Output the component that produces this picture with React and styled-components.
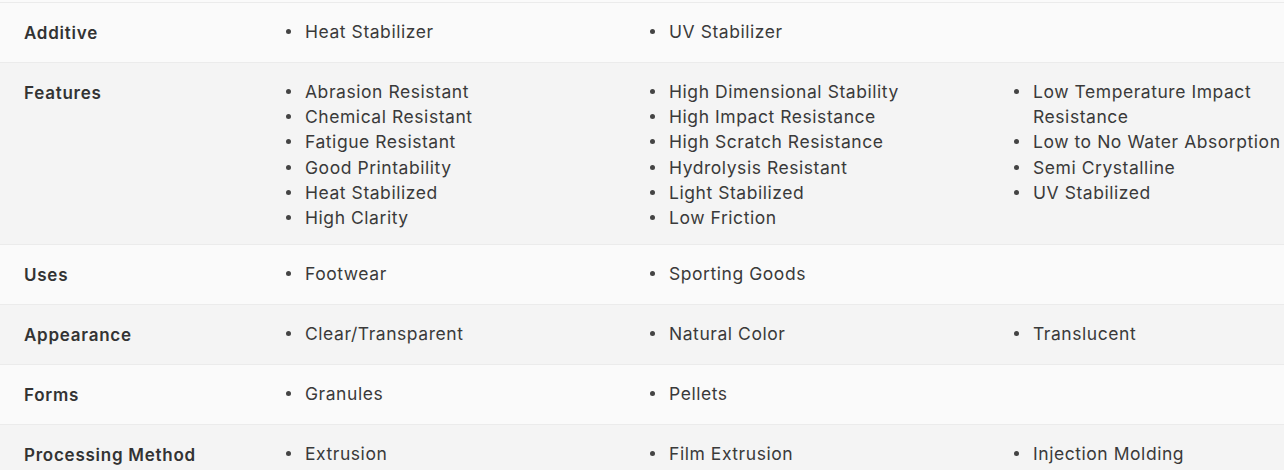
import styled, { createGlobalStyle } from 'styled-components';

const GlobalStyle = createGlobalStyle`
  html, body {
    margin: 0;
    padding: 0;
    background: #fafafa;
  }
  body {
    font-family: Inter, "Noto Sans", sans-serif;
    color: #3a3a3a;
  }
`;

const rows = [
  { label: 'Additive', items: ['Heat Stabilizer', 'UV Stabilizer'] },
  {
    label: 'Features',
    items: [
      'Abrasion Resistant',
      'Chemical Resistant',
      'Fatigue Resistant',
      'Good Printability',
      'Heat Stabilized',
      'High Clarity',
      'High Dimensional Stability',
      'High Impact Resistance',
      'High Scratch Resistance',
      'Hydrolysis Resistant',
      'Light Stabilized',
      'Low Friction',
      'Low Temperature Impact Resistance',
      'Low to No Water Absorption',
      'Semi Crystalline',
      'UV Stabilized',
    ],
  },
  { label: 'Uses', items: ['Footwear', 'Sporting Goods'] },
  { label: 'Appearance', items: ['Clear/Transparent', 'Natural Color', 'Translucent'] },
  { label: 'Forms', items: ['Granules', 'Pellets'] },
  { label: 'Processing Method', items: ['Extrusion', 'Film Extrusion', 'Injection Molding'] },
];

// split items into 3 columns, filled top to bottom
const toColumns = (items) => {
  const per = Math.ceil(items.length / 3);
  const cols = [];
  for (let i = 0; i < items.length; i += per) cols.push(items.slice(i, i + per));
  return cols;
};

const App = () => {
  return (
    <>
      <GlobalStyle />
      <Table>
        {rows.map((row, i) => (
          <Row key={row.label} $alt={i % 2 === 1}>
            <Label>{row.label}</Label>
            <Values>
              {toColumns(row.items).map((col, j) => (
                <List key={j}>
                  {col.map((item) => (
                    <Item key={item}>{item}</Item>
                  ))}
                </List>
              ))}
            </Values>
          </Row>
        ))}
      </Table>
    </>
  );
};

const Table = styled.div`
  margin-top: 2px;
  border-top: 1px solid #ebebeb;
  width: 1284px;
  overflow: hidden;
`;

const Row = styled.div`
  display: grid;
  grid-template-columns: 264px 1fr;
  background-color: ${(p) => (p.$alt ? '#f4f4f4' : '#fafafa')};
  border-bottom: 1px solid #ebebeb;
  padding: 15px 0 14px;
`;

const Label = styled.div`
  padding-left: 24px;
  font-size: 17px;
  font-weight: 600;
  letter-spacing: 0.75px;
  line-height: 30px;
  color: #333;
`;

const Values = styled.div`
  display: grid;
  grid-template-columns: 364px 364px 1fr;
  padding-left: 22px;
  padding-right: 0;
`;

const List = styled.ul`
  margin: 0;
  padding: 1px 0 0;
  list-style: none;
`;

const Item = styled.li`
  display: flex;
  align-items: flex-start;
  font-size: 17.5px;
  letter-spacing: 0.55px;
  line-height: 25.2px;
  color: #3a3a3a;

  &::before {
    content: '';
    flex: none;
    width: 5px;
    height: 5px;
    border-radius: 50%;
    background: #444;
    margin: 10px 14px 0 0;
  }
`;

export default App;
